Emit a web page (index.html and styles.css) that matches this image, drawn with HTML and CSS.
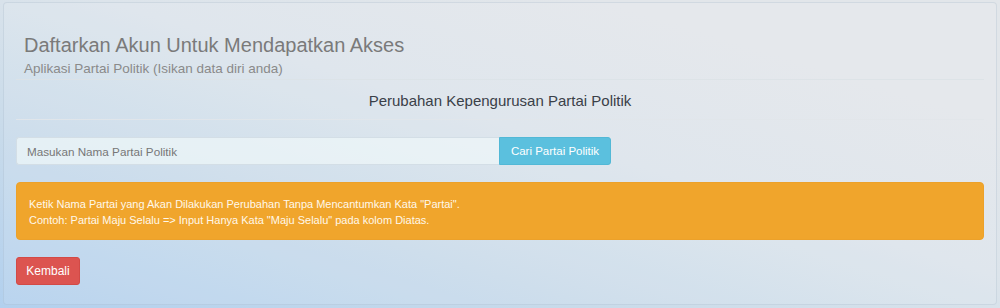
FILE: index.html
```html
<!DOCTYPE html>
<html lang="id">
<head>
    <meta charset="UTF-8">
    <meta name="viewport" content="width=device-width, initial-scale=1.0">
    <title>Perubahan Kepengurusan Partai Politik</title>
    <link rel="stylesheet" href="styles.css">
</head>
<body>
    <div class="panel">
        <div class="panel-header">
            <h2 class="judul">Daftarkan Akun Untuk Mendapatkan Akses</h2>
            <p class="sub-judul">Aplikasi Partai Politik (Isikan data diri anda)</p>
        </div>
        <div class="panel-title">Perubahan Kepengurusan Partai Politik</div>

        <form class="cari" onsubmit="return false">
            <input type="text" class="cari-input" placeholder="Masukan Nama Partai Politik">
            <button type="submit" class="btn btn-info">Cari Partai Politik</button>
        </form>

        <div class="alert">
            Ketik Nama Partai yang Akan Dilakukan Perubahan Tanpa Mencantumkan Kata "Partai".<br>
            Contoh: Partai Maju Selalu =&gt; Input Hanya Kata "Maju Selalu" pada kolom Diatas.
        </div>

        <button type="button" class="btn btn-danger">Kembali</button>
    </div>
</body>
</html>
```

FILE: styles.css
```css
html, body {
    height: 100%;
}
body {
    margin: 0;
    padding: 2px 3px 3px 3px;
    box-sizing: border-box;
    font-family: "Liberation Sans", Arial, sans-serif;
    background: linear-gradient(to top right, #b2d0ee 0%, #c9dbea 30%, #dce4eb 55%, #e2e6ea 80%, #e2e6ea 100%);
}
.panel {
    height: 100%;
    box-sizing: border-box;
    border: 1px solid rgba(150, 170, 190, 0.25);
    border-radius: 4px;
    background: rgba(255, 255, 255, 0.1);
    padding: 31px 12px 0 12px;
}
.panel-header {
    padding: 0 8px 2px 8px;
    border-bottom: 1px solid rgba(220, 226, 231, 0.9);
}
.judul {
    margin: 0;
    font-size: 20px;
    line-height: 22px;
    font-weight: normal;
    color: #7a7a7a;
}
.sub-judul {
    margin: 5px 0 0 0;
    font-size: 13.5px;
    line-height: 16px;
    color: #8a8a8a;
}
.panel-title {
    text-align: center;
    font-size: 15px;
    line-height: 20px;
    color: #3a4048;
    padding: 11px 0 8px 0;
    border-bottom: 1px solid rgba(225, 230, 234, 0.9);
}
.cari {
    display: flex;
    margin: 17px 0 0 0;
}
.cari-input {
    width: 483px;
    height: 28px;
    box-sizing: border-box;
    border: 1px solid #d3dee6;
    border-right: none;
    border-radius: 3px 0 0 3px;
    background: rgba(240, 248, 250, 0.7);
    padding: 0 10px;
    font-family: inherit;
    font-size: 11.7px;
    color: #555;
    outline: none;
}
.cari-input::placeholder {
    color: #777;
}
.btn {
    height: 28px;
    border: 1px solid transparent;
    border-radius: 3px;
    padding: 0 8px;
    font-family: inherit;
    font-size: 12px;
    color: #fff;
    white-space: nowrap;
    cursor: pointer;
}
.cari .btn {
    border-radius: 0 3px 3px 0;
    width: 112px;
    font-size: 11.5px;
}
.btn-info {
    background-color: #5bc0de;
    border-color: #52b8d6;
}
.btn-danger {
    background-color: #dc5450;
    border-color: #d24a46;
    width: 64px;
}
.alert {
    margin: 17px 0 17px 0;
    padding: 13px 12px 11px 12px;
    border: 1px solid #eca12a;
    border-radius: 4px;
    background-color: #f0a52c;
    color: #fff8ea;
    font-size: 11px;
    line-height: 16px;
}
```
